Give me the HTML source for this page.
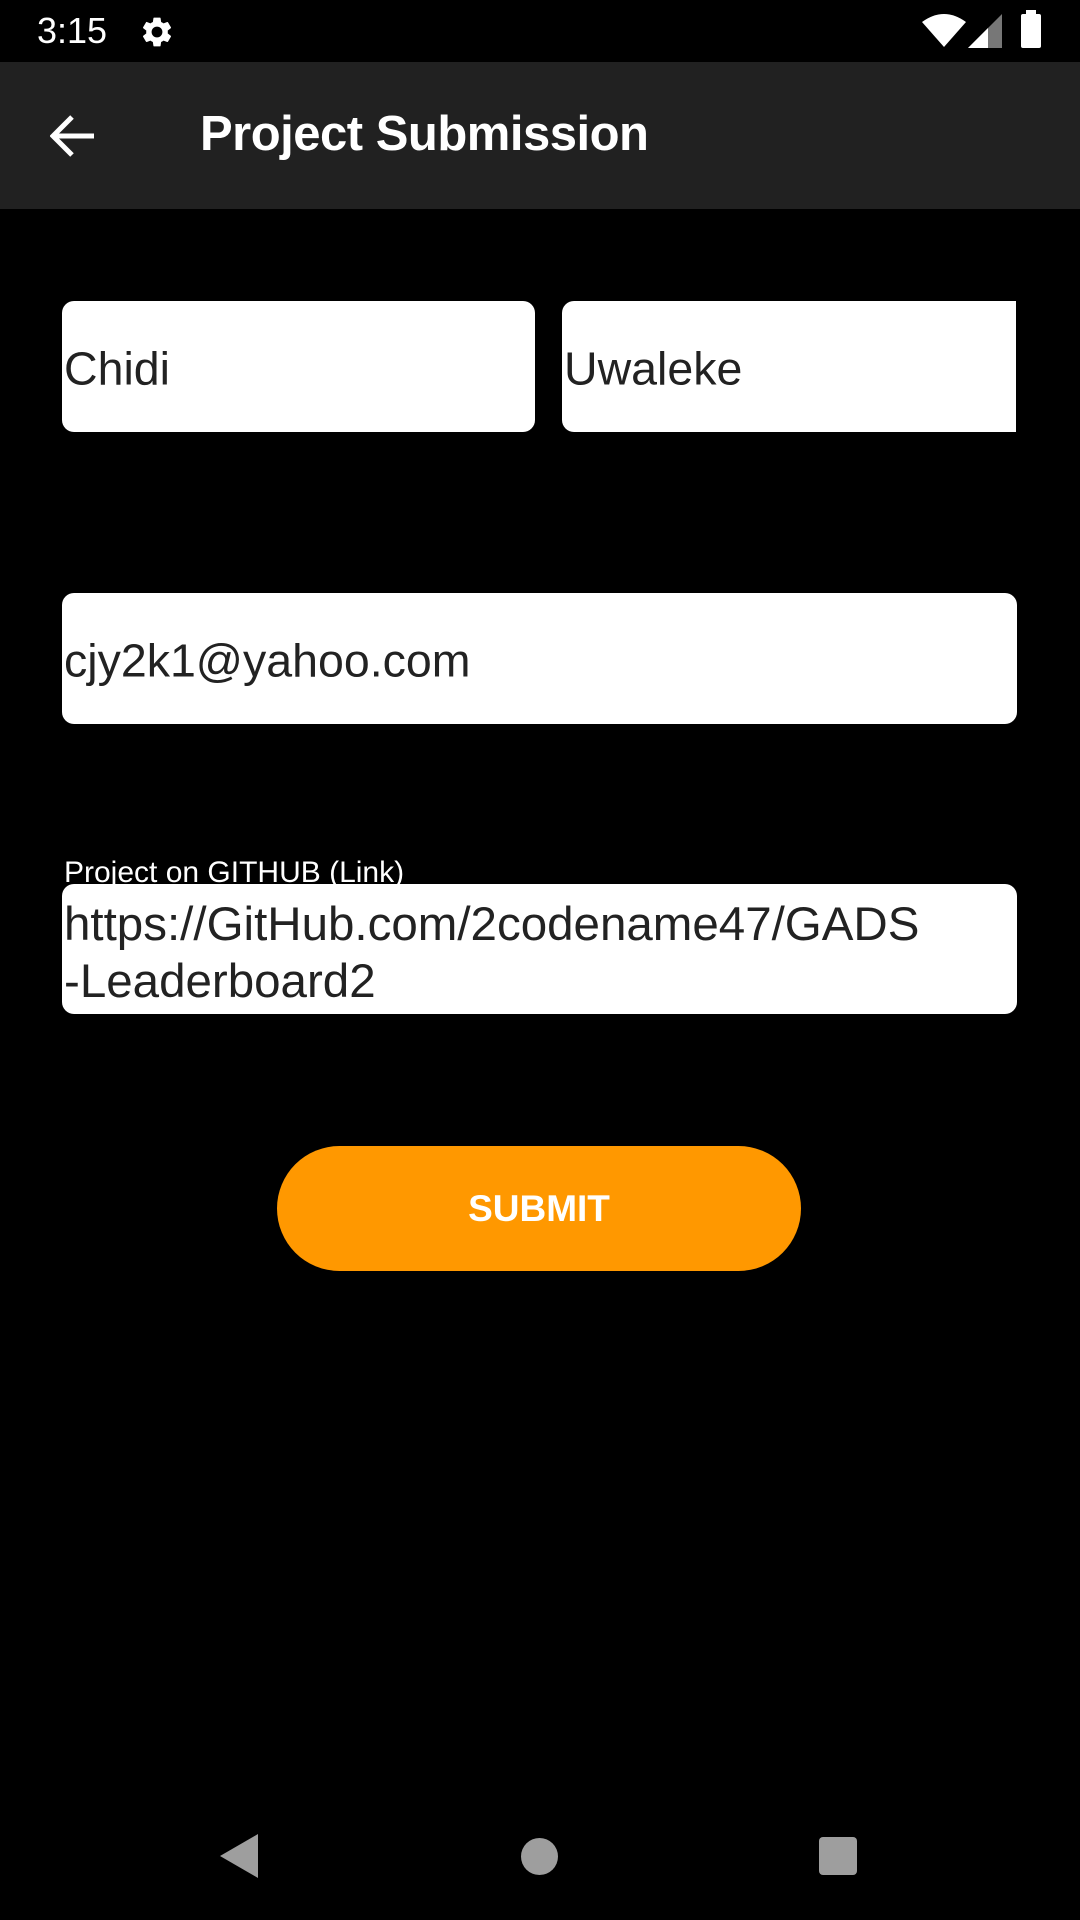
<!DOCTYPE html>
<html><head><meta charset="utf-8"><style>
*{margin:0;padding:0;box-sizing:border-box}
body{width:1080px;height:1920px;background:#000;position:relative;overflow:hidden;font-family:"Liberation Sans",sans-serif;color:#fff}
.abs{position:absolute}
.field{position:absolute;background:#fff;border-radius:12px;color:#222;font-size:46.5px;overflow:hidden}
.field span{position:absolute;left:2px;top:50%;transform:translateY(-47%);white-space:nowrap}
</style></head><body>
<div class="abs" style="left:0;top:0;width:1080px;height:62px;background:#000"></div>
<div class="abs" style="left:37px;top:10px;font-size:36px;">3:15</div>
<svg class="abs" style="left:139px;top:14px" width="36" height="36" viewBox="0 0 24 24"><path fill="#fff" d="M19.14 12.94c.04-.3.06-.61.06-.94 0-.32-.02-.64-.07-.94l2.03-1.580a.49.49 0 0 0 .12-.61l-1.920-3.320a.49.49 0 0 0-.59-.22l-2.390.96c-.5-.38-1.03-.7-1.620-.94l-.36-2.540a.48.48 0 0 0-.48-.41h-3.840a.48.48 0 0 0-.47.41l-.36 2.540c-.59.24-1.130.57-1.620.94l-2.390-.96a.48.48 0 0 0-.59.22L2.74 8.87a.47.47 0 0 0 .12.61l2.030 1.580c-.05.3-.09.63-.09.94s.02.64.07.94l-2.030 1.580a.49.49 0 0 0-.12.61l1.920 3.320c.12.22.37.29.59.22l2.390-.96c.5.38 1.030.7 1.620.94l.36 2.540c.05.24.24.41.48.41h3.840c.24 0 .44-.17.47-.41l.36-2.540c.59-.24 1.130-.56 1.620-.94l2.390.96c.22.08.47 0 .59-.22l1.920-3.320a.47.47 0 0 0-.12-.61l-2.010-1.580zM12 15.6A3.6 3.6 0 1 1 12 8.4a3.6 3.6 0 0 1 0 7.2z"/></svg>
<svg class="abs" style="left:922px;top:14px" width="44" height="34" viewBox="0 0 44 34"><path fill="#fff" d="M22 33 L0 8 Q22 -8 44 8 Z"/></svg>
<svg class="abs" style="left:968px;top:14px" width="34" height="34" viewBox="0 0 34 34"><path fill="#777" d="M34 0 V34 H0 Z"/><path fill="#fff" d="M20 14 V34 H0 L20 14 Z"/></svg>
<div class="abs" style="left:1021px;top:14px;width:20px;height:34px;background:#fff;border-radius:2px"></div>
<div class="abs" style="left:1026px;top:10px;width:10px;height:6px;background:#fff"></div>

<div class="abs" style="left:0;top:62px;width:1080px;height:147px;background:#212121"></div>
<svg class="abs" style="left:50px;top:114px" width="46" height="44" viewBox="0 0 46 44"><path d="M44 22 H4 M22 3 L3 22 L22 41" stroke="#fff" stroke-width="5" fill="none"/></svg>
<div class="abs" style="left:200px;top:106px;font-size:49px;font-weight:bold;letter-spacing:-0.5px">Project Submission</div>

<div class="field" style="left:62px;top:301px;width:473px;height:131px"><span>Chidi</span></div>
<div class="field" style="left:562px;top:301px;width:454px;height:131px;border-radius:12px 0 0 12px"><span>Uwaleke</span></div>
<div class="field" style="left:62px;top:593px;width:955px;height:131px"><span>cjy2k1@yahoo.com</span></div>
<div class="abs" style="left:64px;top:853px;font-size:30px;height:31px;overflow:hidden;line-height:40px">Project on GITHUB (Link)</div>
<div class="field" style="left:62px;top:884px;width:955px;height:130px"><div style="position:absolute;left:2px;top:12px;line-height:57px;font-size:47.5px">https://GitHub.com/2codename47/GADS<br>-Leaderboard2</div></div>

<div class="abs" style="left:277px;top:1146px;width:524px;height:125px;background:#ff9800;border-radius:63px;font-size:37px;font-weight:bold;text-align:center;line-height:125px">SUBMIT</div>

<svg class="abs" style="left:218px;top:1832px" width="42" height="48" viewBox="0 0 42 48"><path fill="#9e9e9e" d="M40 2 V46 L2 24 Z"/></svg>
<div class="abs" style="left:521px;top:1838px;width:37px;height:37px;border-radius:50%;background:#9e9e9e"></div>
<div class="abs" style="left:819px;top:1837px;width:38px;height:38px;border-radius:4px;background:#9e9e9e"></div>
</body></html>
